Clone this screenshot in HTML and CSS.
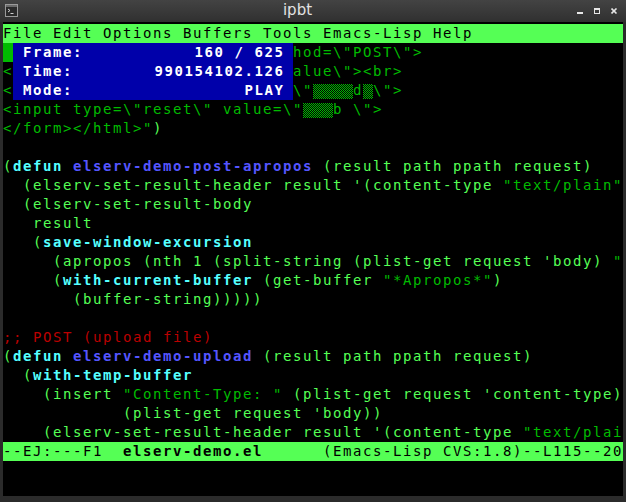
FILE: index.html
```html
<!DOCTYPE html>
<html>
<head>
<meta charset="utf-8">
<link rel="stylesheet" href="styles.css">
</head>
<body>
<svg class="defs" width="0" height="0">
  <defs>
    <pattern id="chk" width="2" height="2" patternUnits="userSpaceOnUse">
      <rect x="0" y="0" width="1" height="1" fill="#00bb00"/>
      <rect x="1" y="1" width="1" height="1" fill="#00bb00"/>
    </pattern>
  </defs>
</svg>
<div class="window">
  <div class="titlebar">
    <svg class="appicon" width="13" height="13" viewBox="0 0 13 13">
      <rect x="0.5" y="0.5" width="12" height="12" fill="#2a2a2a" stroke="#9a9a9a"/>
      <rect x="1" y="1" width="11" height="2" fill="#6a6a6a"/>
      <path d="M3 5 L5 6.5 L3 8" fill="none" stroke="#cfcfcf" stroke-width="1"/>
      <path d="M5.5 9.5 H8.5" stroke="#cfcfcf" stroke-width="1"/>
    </svg>
    <div class="title">ipbt</div>
    <div class="wbtns">
      <svg width="7" height="7" viewBox="0 0 7 7"><rect x="0" y="4" width="6" height="2" fill="#e6e6e6"/></svg>
      <svg width="7" height="7" viewBox="0 0 7 7"><rect x="0.5" y="0.5" width="5" height="5" fill="none" stroke="#e6e6e6"/><rect x="0" y="0" width="6" height="2" fill="#e6e6e6"/></svg>
      <svg width="7" height="7" viewBox="0 0 7 7"><path d="M0.5 0.5 L5.5 5.5 M5.5 0.5 L0.5 5.5" stroke="#e6e6e6" stroke-width="1.6"/></svg>
    </div>
  </div>
  <div class="term">
    <div class="row bar">File Edit Options Buffers Tools Emacs-Lisp Help</div>
    <div class="row"><span class="cursor"></span><span class="gap"></span><span class="s">hod=\"POST\"&gt;</span></div>
    <div class="row"><span class="s">&lt;</span><span class="gap"></span><span class="s">alue\"&gt;&lt;br&gt;</span></div>
    <div class="row"><span class="s">&lt;</span><span class="gap"></span><span class="s">\"<svg class="chk" width="40" height="15"><rect width="40" height="15" fill="url(#chk)"/></svg>d<svg class="chk" width="10" height="15"><rect width="10" height="15" fill="url(#chk)"/></svg>\"&gt;</span></div>
    <div class="row"><span class="s">&lt;input type=\"reset\" value=\"<svg class="chk" width="30" height="15"><rect width="30" height="15" fill="url(#chk)"/></svg>b \"&gt;</span></div>
    <div class="row"><span class="s">&lt;/form&gt;&lt;/html&gt;"</span>)</div>
    <div class="row"></div>
    <div class="row">(<span class="k">defun</span> <span class="f">elserv-demo-post-apropos</span> (result path ppath request)</div>
    <div class="row">  (elserv-set-result-header result '(content-type <span class="s">"text/plain"</span></div>
    <div class="row">  (elserv-set-result-body</div>
    <div class="row">   result</div>
    <div class="row">   (<span class="k">save-window-excursion</span></div>
    <div class="row">     (apropos (nth 1 (split-string (plist-get request 'body) <span class="s">"</span></div>
    <div class="row">     (<span class="k">with-current-buffer</span> (get-buffer <span class="s">"*Apropos*"</span>)</div>
    <div class="row">       (buffer-string)))))</div>
    <div class="row"></div>
    <div class="row"><span class="c">;; POST (upload file)</span></div>
    <div class="row">(<span class="k">defun</span> <span class="f">elserv-demo-upload</span> (result path ppath request)</div>
    <div class="row">  (<span class="k">with-temp-buffer</span></div>
    <div class="row">    (insert <span class="s">"Content-Type: "</span> (plist-get request 'content-type)</div>
    <div class="row">            (plist-get request 'body))</div>
    <div class="row">    (elserv-set-result-header result '(content-type <span class="s">"text/plai</span></div>
    <div class="row bar">--EJ:---F1  <b>elserv-demo.el</b>      (Emacs-Lisp CVS:1.8)--L115--20</div>
    <div class="osd">
      <div class="osdline"><span>Frame:</span><span>160 / 625</span></div>
      <div class="osdline"><span>Time:</span><span>990154102.126</span></div>
      <div class="osdline"><span>Mode:</span><span>PLAY</span></div>
    </div>
  </div>
</div>
</body>
</html>
```
FILE: styles.css
```css
html, body {
  margin: 0;
  padding: 0;
  background: #2b2b2b;
}
.defs {
  position: absolute;
  width: 0;
  height: 0;
}
.window {
  width: 626px;
  height: 502px;
  display: flex;
  flex-direction: column;
  background: #2b2b2b;
}
.titlebar {
  height: 22px;
  flex: none;
  display: flex;
  align-items: flex-start;
  background: linear-gradient(#434343, #303030);
}
.appicon {
  margin: 4px 0 0 5px;
  flex: none;
}
.title {
  flex: 1;
  text-align: center;
  font: 15px/22px "DejaVu Sans", sans-serif;
  color: #e2e2e2;
  margin-top: -1px;
}
.wbtns {
  display: flex;
  gap: 10px;
  margin: 8px 8px 0 0;
  flex: none;
}
.term {
  flex: 1;
  margin: 0 3px 6px 3px;
  padding-top: 2px;
  background: #000;
  position: relative;
  font-family: "DejaVu Sans Mono", monospace;
  font-size: 14px;
  line-height: 19px;
  letter-spacing: 1.5713px;
  color: #55ff55;
}
.row {
  height: 19px;
  white-space: pre;
  overflow: hidden;
}
.bar {
  background: #55ff55;
  color: #000;
}
.bar b {
  font-weight: bold;
}
.s { color: #00bb00; }
.k { color: #55ffff; font-weight: bold; }
.f { color: #5555ff; font-weight: bold; }
.c { color: #bb0000; }
.cursor {
  display: inline-block;
  vertical-align: top;
  width: 10px;
  height: 19px;
  background: #00bb00;
}
.gap {
  display: inline-block;
  vertical-align: top;
  width: 280px;
  height: 19px;
}
.chk {
  display: inline-block;
  vertical-align: top;
  margin-top: 3px;
  shape-rendering: crispEdges;
}
.osd {
  position: absolute;
  left: 10px;
  top: 21px;
  width: 280px;
  height: 57px;
  box-sizing: border-box;
  padding: 0 10px;
  background: #0000aa;
  color: #ffffff;
  font-weight: bold;
}
.osdline {
  height: 19px;
  display: flex;
  justify-content: space-between;
  white-space: pre;
}
.osdline span:last-child {
  margin-right: -1.5713px;
}
```
